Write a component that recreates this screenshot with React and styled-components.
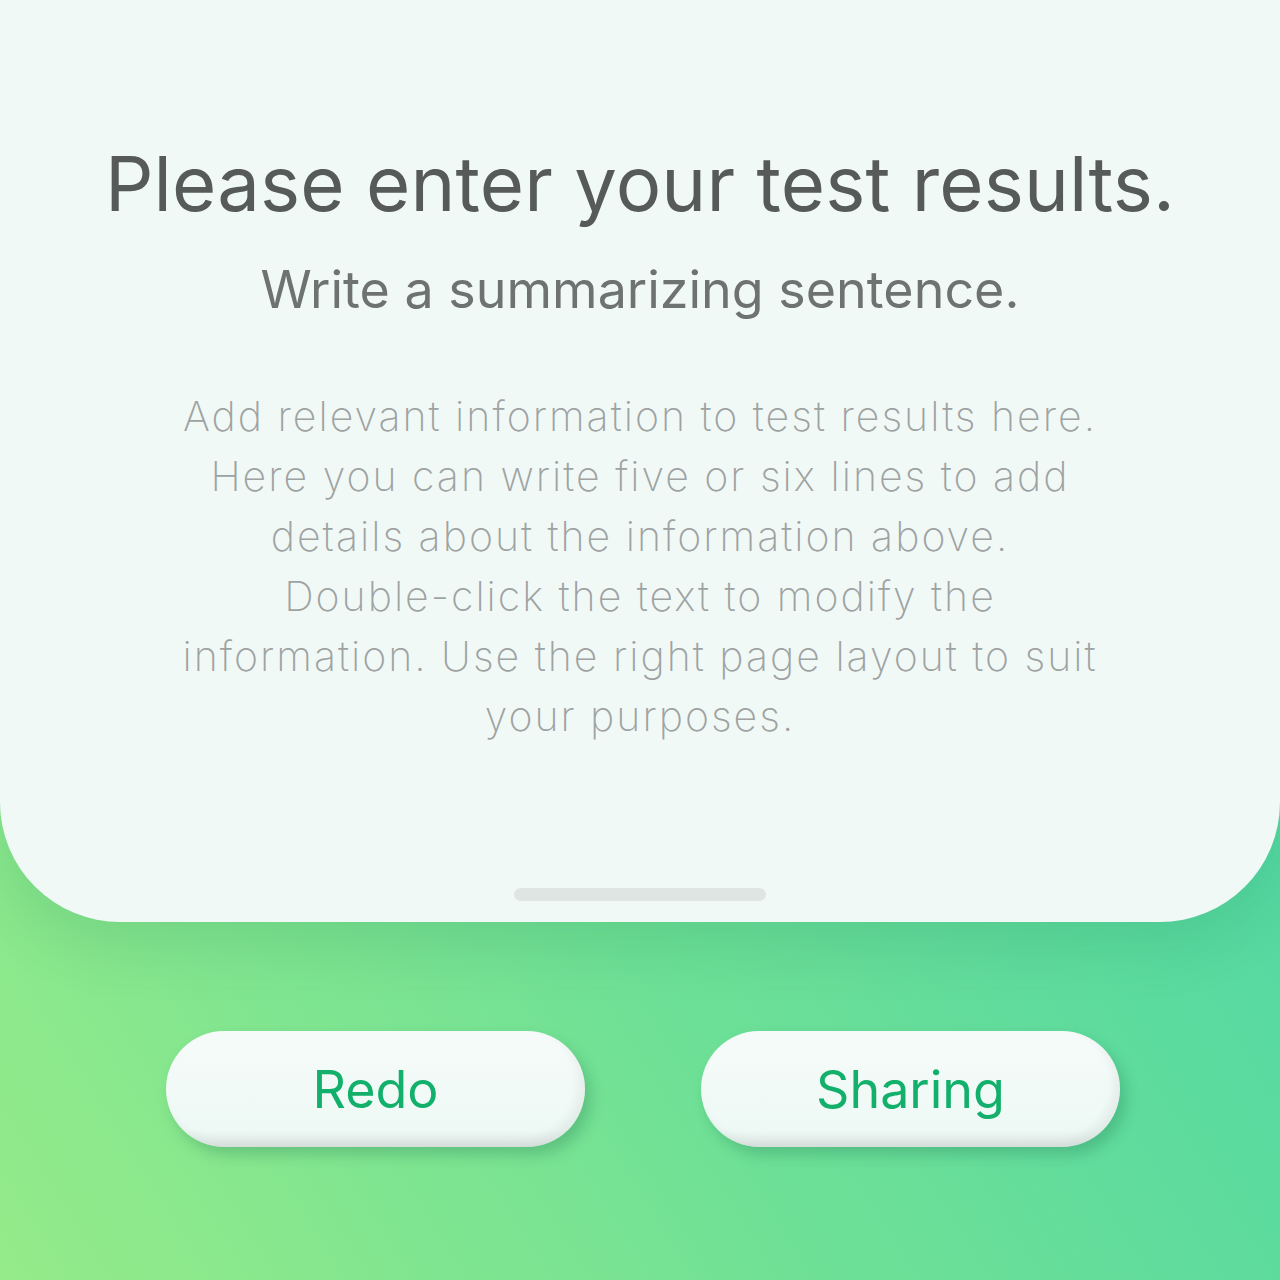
import styled, { createGlobalStyle } from 'styled-components'

const Global = createGlobalStyle`
  html, body { margin: 0; padding: 0; }
  body { font-family: Inter, "Noto Sans", sans-serif; }
`

export default function App(){
  return (<Page>
    <Global/>
    <Card>
      <Title>Please enter your test results.</Title>
      <Subtitle>Write a summarizing sentence.</Subtitle>
      <Body>
        Add relevant information to test results here.<br/>
        Here you can write five or six lines to add<br/>
        details about the information above.<br/>
        Double-click the text to modify the<br/>
        information. Use the right page layout to suit<br/>
        your purposes.
      </Body>
      <Handle/>
    </Card>
    <Buttons>
      <Button>Redo</Button>
      <Button>Sharing</Button>
    </Buttons>
  </Page>)
}

const Page = styled.div`
  width: 1280px;
  height: 1280px;
  overflow: hidden;
  display: flex;
  flex-direction: column;
  background: linear-gradient(58deg, #95eb89 0%, #6ee096 40%, #4cd6a6 85%, #48d4a8 100%);
`
const Card = styled.div`
  height: 922px;
  flex-shrink: 0;
  box-sizing: border-box;
  background: #f1f9f7;
  border-radius: 0 0 120px 120px;
  box-shadow: 0 24px 60px rgba(0, 90, 50, 0.12);
  display: flex;
  flex-direction: column;
  align-items: center;
  padding-top: 140px;
`
const Title = styled.h1`
  margin: 0;
  font-weight: 400;
  font-size: 76px;
  line-height: 86px;
  color: #565b5a;
  letter-spacing: 0.1px;
`
const Subtitle = styled.h2`
  margin: 34px 0 0;
  font-weight: 400;
  font-size: 52px;
  line-height: 60px;
  color: #6e7372;
`
const Body = styled.p`
  margin: 66px 0 0;
  text-align: center;
  font-weight: 200;
  font-size: 41px;
  line-height: 60px;
  color: #9ea3a2;
  letter-spacing: 2px;
`
const Handle = styled.div`
  margin-top: auto;
  margin-bottom: 21px;
  width: 252px;
  height: 13px;
  border-radius: 7px;
  background: #dfe5e3;
`
const Buttons = styled.div`
  display: flex;
  justify-content: center;
  gap: 116px;
  padding-top: 109px;
  padding-left: 6px;
`
const Button = styled.button`
  width: 419px;
  height: 116px;
  border: none;
  border-radius: 58px;
  background: linear-gradient(180deg, #f6fbfa 0%, #eef9f5 85%, #dfe8e5 100%);
  box-shadow: 6px 8px 14px rgba(30, 110, 80, 0.28), inset -6px -6px 10px rgba(0,0,0,0.05);
  font-family: Inter, "Noto Sans", sans-serif;
  font-size: 52px;
  font-weight: 400;
  color: #12b06b;
  padding: 0;
`
